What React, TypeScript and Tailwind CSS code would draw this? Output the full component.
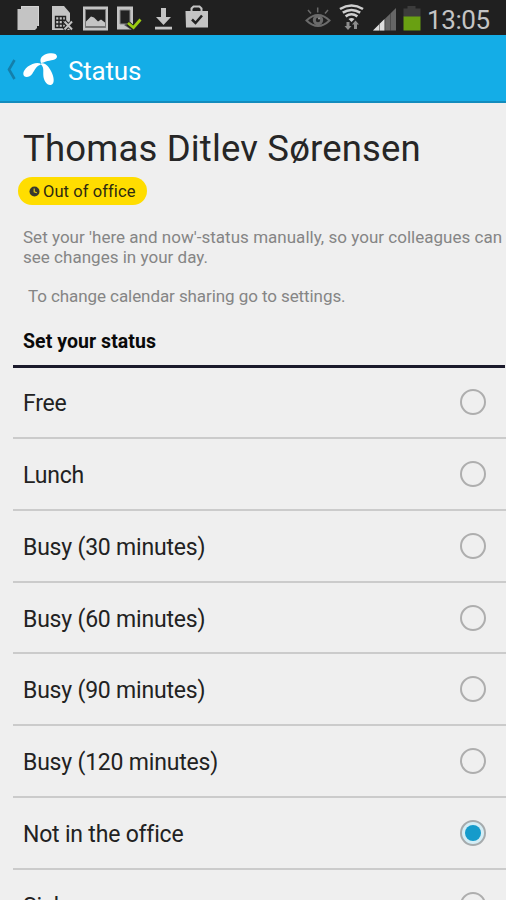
const statuses = [
  'Free',
  'Lunch',
  'Busy (30 minutes)',
  'Busy (60 minutes)',
  'Busy (90 minutes)',
  'Busy (120 minutes)',
  'Not in the office',
  'Sick',
];

function NotificationIcons() {
  return (
    <svg width="212" height="35" viewBox="0 0 212 35" className="shrink-0">
      {/* stacked pages */}
      <path d="M21 6h18v20h-2v2l-2 2H17.500V9H21z" fill="#c4c4c4" />
      <path d="M21.500 9v-2.500h17V26" fill="none" stroke="#d4d4d4" strokeWidth="1" />
      {/* sim card with error */}
      <path d="M52 6h12l6 7v17H52z" fill="#c4c4c4" />
      <path d="M55.500 16.500h10v11h-10zM59 16v12M62.500 16v12M55 20.200h11M55 24h11" fill="none" stroke="#222" strokeWidth="1.400" />
      <path d="M64 21l9 9M73 21l-9 9" stroke="#222" strokeWidth="4" />
      <path d="M64.500 21.500l7.500 8M72 21.500l-7.500 8" stroke="#c4c4c4" strokeWidth="2" />
      {/* picture */}
      <path d="M83 6.500h25v24H83z" fill="#c4c4c4" />
      <path d="M85.500 9.500h20v18h-20z" fill="#222" stroke="#777" strokeWidth="1" />
      <path d="M86 26.500v-5l5-5 3 1 4 4 3-2 4 3v4z" fill="#c4c4c4" />
      {/* device with tick */}
      <path d="M117 6.500h16v23h-16z" fill="#c4c4c4" />
      <path d="M120 10h10v14h-10z" fill="#222" stroke="#888" />
      <path d="M124 25l6-3v7z" fill="#555" />
      <path d="M128 23.500l5.500 4.500 7-8" fill="none" stroke="#222" strokeWidth="5" />
      <path d="M128 23l5.500 4.500 7-8" fill="none" stroke="#9ccc12" strokeWidth="2.800" />
      {/* download */}
      <path d="M161 8h5v9h5l-7.500 8-7.500-8h5z" fill="#c4c4c4" />
      <path d="M155 26.700h17v2.800h-17z" fill="#c4c4c4" />
      {/* store bag */}
      <path d="M191.500 12V8.500l2-2h6l2 2V12" fill="none" stroke="#c4c4c4" strokeWidth="2" />
      <path d="M185.500 11h22.500v16.500h-22z" fill="#c4c4c4" />
      <path d="M192 19.500l3.500 3.500 6.500-7.500" fill="none" stroke="#222" strokeWidth="2.500" />
    </svg>
  );
}

function SystemIcons() {
  return (
    <svg width="120" height="35" viewBox="303 0 120 35" className="shrink-0">
      {/* eye */}
      <g fill="none" stroke="#6a6a6a" strokeWidth="2">
        <path d="M306.500 20.500q11.500-11 23 0q-11.500 11-23 0z" />
        <path d="M308 10l3 3.500M317.700 7.500v5M328 10l-3 3.500" strokeWidth="1.500" />
        <circle cx="318" cy="20" r="3.700" fill="#222" strokeWidth="3" />
      </g>
      <circle cx="319" cy="18.500" r="1" fill="#999" />
      {/* wifi with traffic arrows */}
      <g fill="none" stroke="#cfcfcf" strokeWidth="2.600">
        <path d="M340 9q11.500-7 23 0" />
        <path d="M342.800 12.700q8.700-5.500 17.400 0" />
        <path d="M345.600 16.300q5.900-4 11.800 0" />
      </g>
      <path d="M348.500 19q3-2 6 0l-3 3z" fill="#cfcfcf" />
      <path d="M346.500 22v4h-2l3.500 4 3.500-4h-2v-4zM354 29v-4.500h-2l3.500-4 3.500 4h-2V29z" fill="#8d8d8d" />
      {/* cell signal */}
      <path d="M373 30.500L396 8v22.500z" fill="#666" />
      <path d="M373 30.500L384.500 19v11.500z" fill="#ddd" />
      <path d="M379.500 24v7M385 19v12M390.500 13v18" stroke="#333" strokeWidth="0.800" opacity="0.600" />
      {/* battery */}
      <path d="M403.500 8.500h4v-2.500h8v2.500h5v8.500h-17z" fill="#3c3c3c" />
      <path d="M403.500 16.500h17v14h-17z" fill="#69a012" />
    </svg>
  );
}

function StatusBar() {
  return (
    <div className="flex h-[35px] items-center bg-[#202020]">
      <NotificationIcons />
      <div className="flex-1" />
      <SystemIcons />
      <div className="w-[83px] pt-[4px] pl-[4px] text-[26px] leading-[32px] tracking-[-0.4px] whitespace-nowrap text-[#c4c4c4]">
        13:05
      </div>
    </div>
  );
}

function AppBar() {
  return (
    <header className="flex h-[68px] items-center border-b-2 border-[#138cbd] bg-[#14ade7]">
      <svg width="60" height="66" viewBox="0 35 60 66" className="shrink-0">
        <path d="M14.500 60L9 69.500l5.500 9.500" fill="none" stroke="#147faa" strokeWidth="2.600" />
        <g fill="#fff">
          <path d="M41 63C39 58 43 54.500 48 53.500c5-1 9 0 9 3 0 4-7 3.500-11 5-2 .7-3 1.500-5 1.500z" />
          <path d="M40.500 63.500C34 61 23 68 23.300 74c.2 4 6 4 9-.2 2.500-3.600 4-8.300 8.500-9z" />
          <path d="M41 63.500c5-1 8 4 10.500 8.500 2.500 5 3.500 12-.5 13-4 .8-7.500-4.500-7.700-10-.1-5 .7-7.500-2.300-10.500z" />
        </g>
      </svg>
      <h1 className="ml-[8px] pt-[5px] text-[26px] leading-[32px] tracking-[-0.2px] text-white">Status</h1>
    </header>
  );
}

function Radio({ checked }: { checked: boolean }) {
  return (
    <span
      className={
        checked
          ? 'flex size-[26px] items-center justify-center rounded-full border-2 border-[#a6abad] bg-[#d4edf5]'
          : 'flex size-[26px] items-center justify-center rounded-full border-2 border-[#aeaeae]'
      }
    >
      {checked && <span className="size-4 rounded-full bg-[#159bcb]" />}
    </span>
  );
}

export default function App() {
  return (
    <div className="flex h-[900px] w-[506px] flex-col overflow-hidden bg-[#efefef] font-['Roboto',sans-serif]">
      <StatusBar />
      <AppBar />
      <main className="pl-[13px]">
        <section className="pl-[10px]">
          <h2 className="pt-[26px] text-[36.500px] leading-[40px] tracking-[0.170px] whitespace-nowrap text-[#262626]">
            Thomas Ditlev Sørensen
          </h2>
          <div className="mt-[8px] -ml-[5px] flex h-[28px] w-[129px] items-center rounded-full bg-[#ffdd00] pl-[11px]">
            <svg width="11" height="11" viewBox="0 0 11 11" className="mr-[3px] shrink-0">
              <circle cx="5.500" cy="5.500" r="5" fill="#38382e" />
              <path d="M5.200 2.500v3.300l2.600 1" fill="none" stroke="#e8cc10" strokeWidth="1.200" />
            </svg>
            <span className="pt-[2px] text-[16.500px] tracking-[0.080px] whitespace-nowrap text-[#2c2a12]">Out of office</span>
          </div>
          <p className="mt-[22px] text-[17px] leading-[20px] tracking-[0.020px] whitespace-nowrap text-[#858585]">
            Set your 'here and now'-status manually, so your colleagues can
            <br />
            see changes in your day.
          </p>
          <p className="mt-[19px] pl-[5px] text-[17px] leading-[20px] tracking-[-0.080px] whitespace-nowrap text-[#858585]">
            To change calendar sharing go to settings.
          </p>
          <h3 className="mt-[23px] pt-px text-[19.500px] leading-[24px] font-bold tracking-[0.060px] text-[#0a0a0a]">
            Set your status
          </h3>
        </section>
        <div className="mt-[11px] mr-px h-[3px] bg-[#1b1a2b]" />
        <ul className="-mt-[0.600px]">
          {statuses.map((status) => (
            <li
              key={status}
              className="flex h-[71.750px] items-center justify-between border-b-2 border-[#cbcbcb] pr-[20px] pl-[10px]"
            >
              <span className="pt-[4px] text-[23px] leading-[28px] tracking-[-0.200px] text-[#222]">{status}</span>
              <Radio checked={status === 'Not in the office'} />
            </li>
          ))}
        </ul>
      </main>
    </div>
  );
}
